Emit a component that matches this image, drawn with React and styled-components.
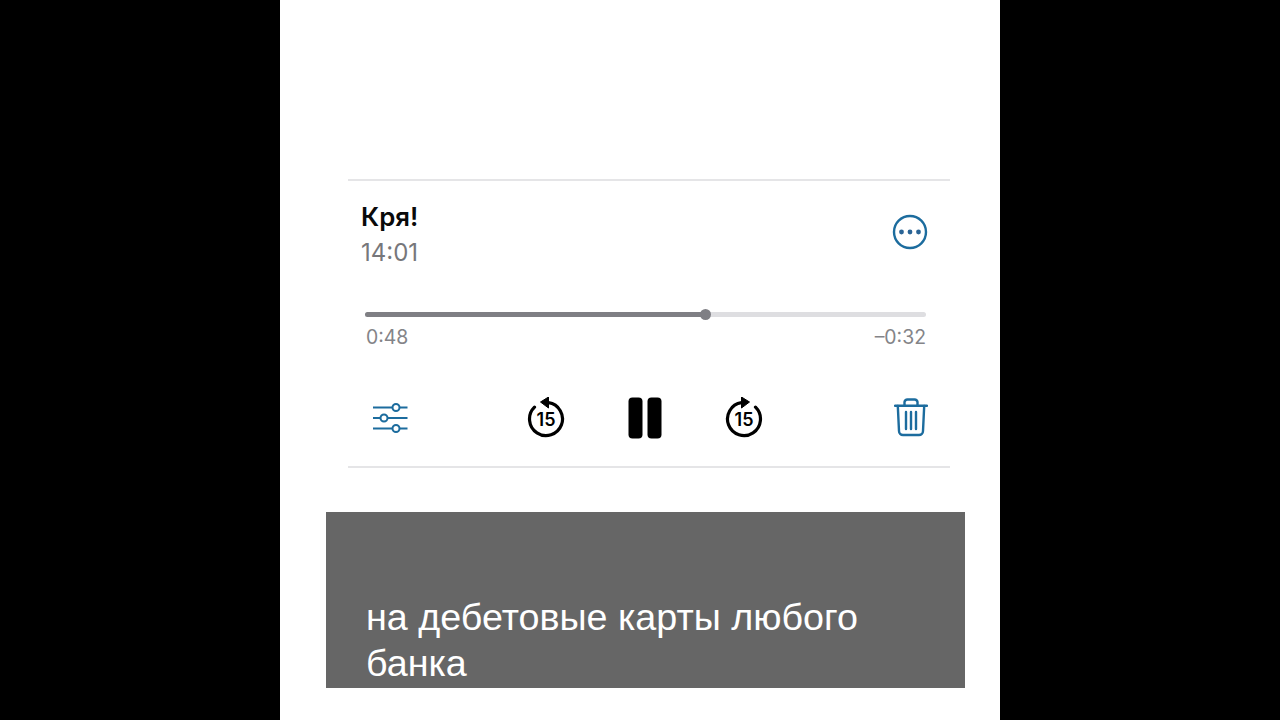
import React from 'react'
import styled, { createGlobalStyle } from 'styled-components'

const Global = createGlobalStyle`
    html, body { margin: 0; padding: 0; background: #000; }
    body { font-family: "Liberation Sans", Arial, sans-serif; overflow: hidden; }
`

const Stage = styled.div`
    width: 1280px;
    height: 720px;
    background: #000;
    display: flex;
    justify-content: center;
`

const Column = styled.main`
    width: 720px;
    height: 720px;
    box-sizing: border-box;
    background: #fff;
    padding-top: 179px;
    display: flex;
    flex-direction: column;
`

const Card = styled.section`
    width: 602px;
    height: 289px;
    margin-left: 68px;
    box-sizing: border-box;
    border-top: 2px solid #e5e5e7;
    border-bottom: 2px solid #e5e5e7;
    display: flex;
    flex-direction: column;
`

const Head = styled.div`
    display: flex;
    justify-content: space-between;
    align-items: flex-start;
    padding: 21px 22px 0 13px;
    height: 131px;
    box-sizing: border-box;
`

const Title = styled.div`
    font-family: Inter, "Liberation Sans", sans-serif;
    font-size: 25.8px;
    line-height: 30px;
    font-weight: 600;
    color: #0a0a0a;
`

const Clock = styled.div`
    font-family: Inter, "Liberation Sans", sans-serif;
    font-size: 24px;
    line-height: 30px;
    margin-top: 6px;
    color: #77777b;
`

const MoreBtn = styled.svg`
    width: 36px;
    height: 36px;
    margin-top: 12px;
    display: block;
`

const Track = styled.div`
    position: relative;
    height: 5px;
    margin: 0 24px 0 17px;
    border-radius: 3px;
    background: #dedee1;
`

const Fill = styled.div`
    height: 100%;
    border-radius: 3px;
    background: #7f7f84;
`

const Thumb = styled.div`
    position: absolute;
    top: -3px;
    width: 11px;
    height: 11px;
    margin-left: -5px;
    border-radius: 50%;
    background: #7f7f84;
`

const Times = styled.div`
    display: flex;
    justify-content: space-between;
    margin: 9px 24px 0 18px;
    font-family: Inter, "Liberation Sans", sans-serif;
    font-size: 19.4px;
    line-height: 22px;
    color: #848488;
`

const Controls = styled.div`
    display: flex;
    align-items: center;
    padding: 0 22px 0 25px;
    margin-top: 48px;
    height: 44px;
`

const Middle = styled.div`
    display: flex;
    align-items: center;
    margin-left: 119px;
    gap: 63px;
`

const Trash = styled.svg`
    display: block;
    width: 34px;
    height: 40px;
    margin-left: auto;
`

const Caption = styled.div`
    width: 639px;
    height: 176px;
    margin: 44px 0 0 46px;
    padding: 0 60px 2px 40px;
    box-sizing: border-box;
    background: #666;
    color: #fff;
    font-size: 37.7px;
    line-height: 46px;
    display: flex;
    align-items: flex-end;
`

const blue = '#1c6c9e'

function Skip({ forward }) {
    return (
        <svg width="38" height="42" viewBox="0 0 38 42" style={forward ? { display: 'block', transform: 'scaleX(-1)' } : { display: 'block' }}>
            <path d="M21.5 5.7 A16.5 16.5 0 1 1 7.5 10.2" fill="none" stroke="#000" strokeWidth="3.2" strokeLinecap="round" />
            <path d="M13.5 5 L21.5 0 L21.5 11 Z" fill="#000" stroke="#000" strokeWidth="1" strokeLinejoin="round" />
            <text
                x="19"
                y="28.5"
                textAnchor="middle"
                fontFamily='Inter, "Liberation Sans", sans-serif'
                fontSize="18"
                fontWeight="600"
                fill="#000"
                transform={forward ? 'translate(38 0) scale(-1 1)' : undefined}
            >
                15
            </text>
        </svg>
    )
}

export default function App() {
    return (
        <Stage>
            <Global />
            <Column>
                <Card>
                    <Head>
                        <div>
                            <Title>Кря!</Title>
                            <Clock>14:01</Clock>
                        </div>
                        <MoreBtn viewBox="0 0 36 36">
                            <circle cx="18" cy="18" r="16" fill="none" stroke={blue} strokeWidth="2.4" />
                            <circle cx="9.5" cy="18" r="2.4" fill="#2a6496" />
                            <circle cx="18" cy="18" r="2.4" fill="#2a6496" />
                            <circle cx="26.5" cy="18" r="2.4" fill="#2a6496" />
                        </MoreBtn>
                    </Head>
                    <Track>
                        <Fill style={{ width: '60.6%' }} />
                        <Thumb style={{ left: '60.6%' }} />
                    </Track>
                    <Times>
                        <span>0:48</span>
                        <span>–0:32</span>
                    </Times>
                    <Controls>
                        <svg width="35" height="32" viewBox="0 0 35 32" style={{ display: 'block' }}>
                            <g stroke={blue} strokeWidth="2" fill="none">
                                <path d="M0 5.5H19.5M26.5 5.5H34.5M0 16H7.5M14.5 16H34.5M0 26.5H19.5M26.5 26.5H34.5" />
                                <circle cx="23" cy="5.5" r="3.5" />
                                <circle cx="11" cy="16" r="3.5" />
                                <circle cx="23" cy="26.5" r="3.5" />
                            </g>
                        </svg>
                        <Middle>
                            <Skip />
                            <svg width="34" height="42" viewBox="0 0 34 42" style={{ display: 'block' }}>
                                <rect x="0.5" y="0.5" width="14" height="41" rx="4" fill="#000" />
                                <rect x="19.5" y="0.5" width="14" height="41" rx="4" fill="#000" />
                            </svg>
                            <Skip forward />
                        </Middle>
                        <Trash viewBox="0 0 34 40">
                            <g stroke={blue} strokeWidth="2.4" fill="none" strokeLinecap="round">
                                <path d="M1 7.7H33" />
                                <path d="M3.8 8L5 33A4 4 0 0 0 9 37H25A4 4 0 0 0 29 33L30.2 8" />
                                <path d="M10.5 7V4A3 3 0 0 1 13.5 1.5H20.5A3 3 0 0 1 23.5 4V7" />
                                <path d="M12 14V31M17 14V31M22 14V31" />
                            </g>
                        </Trash>
                    </Controls>
                </Card>
                <Caption>на дебетовые карты любого банка</Caption>
            </Column>
        </Stage>
    )
}
